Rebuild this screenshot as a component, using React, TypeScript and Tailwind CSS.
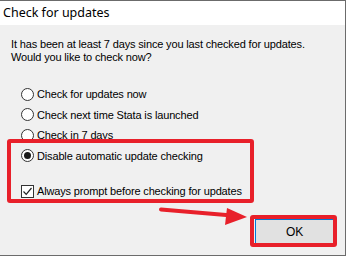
import { ReactNode } from "react"

function Radio({ checked, children }: { checked?: boolean; children: ReactNode }) {
    return (
        <div className="flex items-center h-[20.5px] pl-[21px]">
            <span className="w-[13px] h-[13px] rounded-full border border-[#333] bg-white flex items-center justify-center">
                {checked && <span className="w-[7px] h-[7px] rounded-full bg-[#1a1a1a]" />}
            </span>
            <span className="ml-[3px]">{children}</span>
        </div>
    )
}

function Checkbox({ checked, children }: { checked?: boolean; children: ReactNode }) {
    return (
        <div className="flex items-center h-[20px] pl-[21px]">
            <span className="w-[13px] h-[13px] border border-[#333] bg-white flex items-center justify-center">
                {checked && (
                    <svg width="11" height="11" viewBox="0 0 11 11">
                        <path d="M1.5 5.5 L4.2 8.3 L9.5 2" fill="none" stroke="#222" strokeWidth="1.2" />
                    </svg>
                )}
            </span>
            <span className="ml-[3px]">{children}</span>
        </div>
    )
}

export default function App() {
    return (
        <div className="w-[347px] h-[256px] bg-white relative overflow-hidden">
            <div className="w-[346px] h-full border-t border-r border-b border-[#6b6b6b] flex flex-col">
                <div className="h-[24px] bg-white pl-[3px] text-[12.5px] leading-[24px] text-black font-['Noto_Sans','Liberation_Sans',sans-serif]">
                    Check for updates
                </div>
                <div className="flex-1 bg-[#f0f0f0] text-[11px] text-black font-['Liberation_Sans',sans-serif] tracking-[-0.15px]">
                    <p className="pl-[11px] pt-[13px] leading-[13px]">
                        It has been at least 7 days since you last checked for updates.<br />
                        Would you like to check now?
                    </p>
                    <div className="mt-[20px]">
                        <Radio>Check for updates now</Radio>
                        <Radio>Check next time Stata is launched</Radio>
                        <Radio>Check in 7 days</Radio>
                        <Radio checked>Disable automatic update checking</Radio>
                    </div>
                    <div className="mt-[15px]">
                        <Checkbox checked>Always prompt before checking for updates</Checkbox>
                    </div>
                    <div className="flex justify-end pr-[11px] mt-[18px]">
                        <button className="w-[79px] h-[26px] bg-[#e1e1e1] border border-[#0078d7] text-[12px]">OK</button>
                    </div>
                </div>
            </div>

            {/* annotations */}
            <div className="absolute left-[7px] top-[139px] w-[247px] h-[64px] border-[4px] border-[#e8202a] rounded-[3px]" />
            <div className="absolute left-[250px] top-[215px] w-[87px] h-[32px] border-[4px] border-[#e8202a] rounded-[3px]" />
            <svg className="absolute left-0 top-0" width="347" height="256">
                <line x1="161" y1="209.5" x2="232" y2="215.5" stroke="#e8202a" strokeWidth="4" strokeLinecap="round" />
                <polygon points="227,208 247,217 225,225" fill="#e8202a" />
            </svg>
        </div>
    )
}
